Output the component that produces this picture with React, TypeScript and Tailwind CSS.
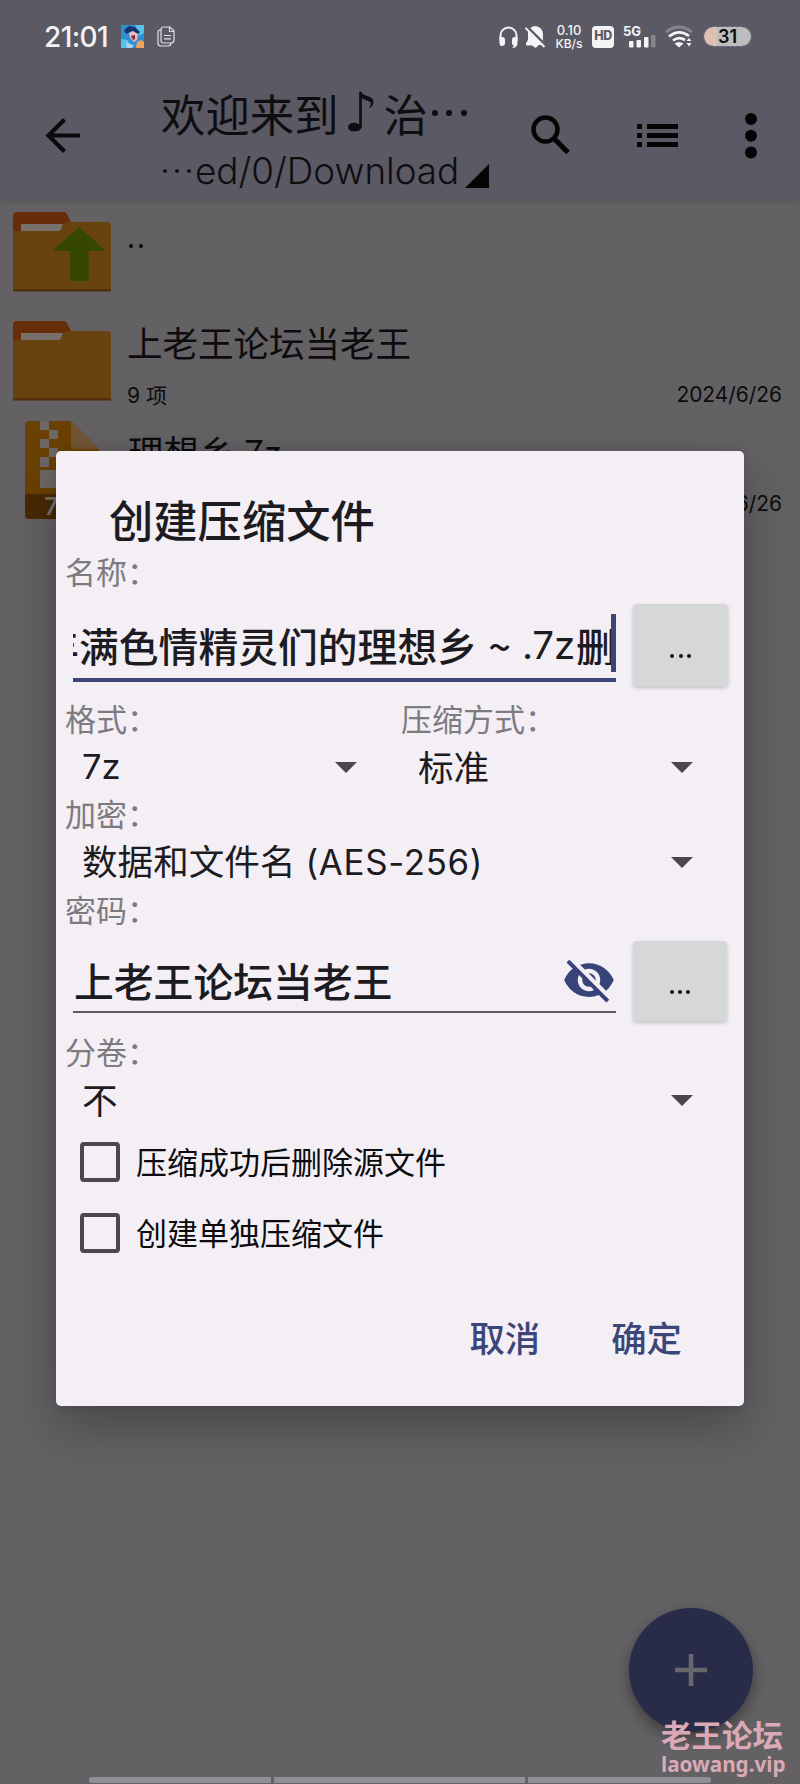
import type { ReactNode } from "react";

const LABEL = "h-9 flex items-center pb-[5px] pl-[9px] text-[31px] leading-none text-[#7d7b80]";
const VALUE = "pb-[4px] text-[35.6px] leading-none text-[#1c1b1f] whitespace-pre";

function Caret() {
  return (
    <svg className="mb-px shrink-0" width="22" height="11" viewBox="0 0 22 11">
      <path d="M0 0h22L11 11z" fill="#49474c" />
    </svg>
  );
}

function MoreButton({ className }: { className: string }) {
  return (
    <button
      className={`flex shrink-0 items-center justify-center gap-[4.2px] rounded bg-[#d6d8d8] shadow-[0_2px_4px_rgba(0,0,0,0.2)] ${className}`}
    >
      <i className="size-1 rounded-full bg-[#151517]" />
      <i className="size-1 rounded-full bg-[#151517]" />
      <i className="size-1 rounded-full bg-[#151517]" />
    </button>
  );
}

function CheckRow({ children }: { children: ReactNode }) {
  return (
    <label className="flex h-[71.5px] items-center gap-4 pl-6">
      <span className="size-10 rounded border-[4.5px] border-[#4b494e]" />
      <span className="pb-[3px] text-[31px] leading-none text-[#0c0c0e]">{children}</span>
    </label>
  );
}

function Folder({ up = false }: { up?: boolean }) {
  return (
    <svg width="98" height="80" viewBox="0 0 98 80" className="shrink-0">
      <path d="M0 30V4q0-4 4-4h47q2 0 3 2l5 10v18z" fill="#672c08" />
      <path d="M8 12h42l-3 8H8z" fill="#77706c" />
      <path d="M0 19h46q2 0 3-3l2-4q1-2 4-2h39q4 0 4 4v65H0z" fill="#68430f" />
      <path d="M0 77h98v2.5H0z" fill="#51300b" />
      {up && <path d="M66 15l27 24H75.500v30H57V39H39z" fill="#354700" />}
    </svg>
  );
}

function ArchiveFile() {
  return (
    <svg width="74" height="98" viewBox="0 0 74 98" className="shrink-0">
      <path d="M4 0h42l28 28v66q0 4-4 4H4q-4 0-4-4V4q0-4 4-4z" fill="#6b4103" />
      <path d="M46 0l28 28H50q-4 0-4-4z" fill="#705433" />
      <path d="M0 73h74v21q0 4-4 4H4q-4 0-4-4z" fill="#472a03" />
      <path
        d="M15 0h9v9h-9zM24 9h9v9h-9zM15 18h9v9h-9zM24 27h9v9h-9zM15 36h9v10h-9zM15 49h18v18H15z"
        fill="#6d6867"
      />
      <text x="19" y="94" fontSize="25" fontWeight="700" fontFamily="Lato" fill="#77706c">
        7Z
      </text>
    </svg>
  );
}

function StatusBar() {
  return (
    <div className="flex h-[73px] items-center pr-[49px] pl-[44px] text-[#f2f2f5]">
      <span className="w-[77px] font-[Inter] text-[28px] leading-none font-medium tracking-[-0.6px]">21:01</span>
      <svg width="23" height="23" viewBox="0 0 23 23">
        <rect width="23" height="23" fill="#2f8fd0" />
        <path d="M0 14l7 1 3 8H0zM14 0h9v8l-5 3z" fill="#56c3ea" />
        <path d="M3 5l5-4 6 1 5 5-3 3-5-4-6 3z" fill="#18346f" />
        <path d="M8 8l4-2 5 3-1 6-3 2-4-4z" fill="#e8bcb8" />
        <path d="M10 11l4-1v4l-2 1z" fill="#822746" />
        <path d="M16 17l4-2 3 2v6h-8z" fill="#f3a15c" />
        <path d="M5 17l4 2 4 1-2 3H6z" fill="#a9d6ec" />
      </svg>
      <svg className="ml-[13px]" width="18" height="21" viewBox="0 0 18 21" fill="none" stroke="#e0e0e4" strokeWidth="1.2">
        <path d="M6.500 1H13l4 4v9q0 3-3 3H6.500q-2.500 0-2.500-2.500V3.500Q4 1 6.500 1zM12.500 1v4.500H17M4 3.500Q1 4 1 6v11q0 3 3 3h7q3 0 3-3M7 9.500h7M7 12.800h7" />
      </svg>
      <div className="ml-auto flex items-center">
        <svg width="19" height="22" viewBox="0 0 19 22">
          <path d="M1.500 15V9.500a8 8 0 0116 0V15" fill="none" stroke="#f4f4f6" strokeWidth="2" />
          <path d="M.5 11h3q2.500 0 2.500 3v3q0 3-3 3-2.500 0-2.500-3zM18.500 11h-3q-2.500 0-2.500 3v3q0 2.500 2 3l-2 2q5.500 0 5.500-5z" fill="#f4f4f6" />
        </svg>
        <svg className="ml-[7px]" width="21" height="22" viewBox="0 0 21 22">
          <path d="M4 3Q7 0 10.500 0q7 1 7.500 8v7q1 1.500 2 2.500v1.500h-6.500Q10.500 24 7.500 19.500H1V17q2-2 2-4V7z" fill="#f4f4f6" />
          <path d="M2 .5L21 19.500" stroke="#5b5963" strokeWidth="2.500" />
          <path d="M.5 1.800L19.500 21" stroke="#f4f4f6" strokeWidth="1.900" />
        </svg>
        <div className="ml-[7px] flex w-8 flex-col items-center font-[Inter] text-[13px] leading-[13px] font-medium">
          <span>0.10</span>
          <span className="text-[12px]">KB/s</span>
        </div>
        <div className="ml-[7px] flex h-[22px] w-[22px] items-center justify-center rounded-[4px] bg-[#f4f4f6] font-[Inter] text-[12.5px] leading-none font-extrabold tracking-[-0.5px] text-[#5b5962]">
          HD
        </div>
        <svg className="ml-[9px]" width="33" height="23" viewBox="0 0 33 23" fill="#f4f4f6">
          <text x="0" y="10.500" fontSize="13" fontWeight="700" fontFamily="Inter">5G</text>
          <rect x="6" y="16" width="4.500" height="6.500" rx="1" />
          <rect x="13.500" y="15" width="4.500" height="7.500" rx="1" />
          <rect x="21" y="12" width="4.500" height="10.500" rx="1" />
          <rect x="28" y="10" width="4.500" height="12.500" rx="1" fill="#86848c" />
        </svg>
        <svg className="ml-[9px]" width="28" height="23" viewBox="0 0 28 23" fill="none" strokeWidth="2.800">
          <path d="M1 7Q14-3 27 7" stroke="#86848c" />
          <path d="M4 11.500q10-8 20-.5M8 15.500q6-4.500 12-.5" stroke="#f4f4f6" />
          <path d="M9.500 18.500q4.500-3 9 0L14 22.500zM21.500 16l2.500-3 2.500 3zM21.500 18l2.500 3.500 2.500-3.500z" fill="#f4f4f6" />
        </svg>
        <div className="ml-[11px] flex h-[19px] w-[47px] items-center justify-center rounded-full bg-[linear-gradient(90deg,#dfbfb2_0,#dfbfb2_12px,#bdbdbd_14px)] font-[Inter] text-[18px] leading-none font-semibold text-[#0b0b0d] outline-1 outline-dashed outline-[#77758c]">
          31
        </div>
      </div>
    </div>
  );
}

function Toolbar() {
  return (
    <div className="flex h-[127px] text-[#0e0e11]">
      <svg className="mt-[45px] ml-[45px] shrink-0" width="35" height="35" viewBox="0 0 35 35" fill="none" stroke="#0a0a0c" strokeWidth="4.200">
        <path d="M19.500 1.500L3.500 17.500l16 16M3 17.500h32" />
      </svg>
      <div className="ml-[81px] w-[335px]">
        <div className="mt-[18px] flex h-11 items-center text-[44.4px] leading-none whitespace-nowrap">
          <span>欢迎来到</span>
          <span className="w-[45px] text-center font-['DejaVu_Sans'] text-[54px]">♪</span>
          <span>治</span>
          <span className="ml-1 flex gap-[8.5px]">
            <i className="size-1.5 rounded-full bg-[#0e0e11]" />
            <i className="size-1.5 rounded-full bg-[#0e0e11]" />
            <i className="size-1.5 rounded-full bg-[#0e0e11]" />
          </span>
        </div>
        <div className="mt-[16px] flex h-10 items-center">
          <span className="ml-[2px] flex gap-2">
            <i className="size-1 rounded-full bg-[#141418]" />
            <i className="size-1 rounded-full bg-[#141418]" />
            <i className="size-1 rounded-full bg-[#141418]" />
          </span>
          <span className="ml-1 font-[Inter] text-[36.8px] leading-none font-light">ed/0/Download</span>
          <svg className="mt-2.5 ml-1.5 shrink-0" width="24" height="24" viewBox="0 0 24 24">
            <path d="M24 0v24H0z" fill="#050506" />
          </svg>
        </div>
      </div>
      <svg className="mt-[42px] ml-[35px] shrink-0" width="39" height="40" viewBox="0 0 39 40" fill="none" stroke="#050506">
        <circle cx="14.500" cy="14.500" r="12" strokeWidth="4.500" />
        <path d="M23 23.500l14 14" strokeWidth="5.200" />
      </svg>
      <svg className="mt-[51px] ml-[67px] shrink-0" width="41" height="24" viewBox="0 0 41 24" fill="#050506">
        <path d="M0 0h5v5H0zM0 9h5v5H0zM0 18h5v5H0zM10 0h31v5H10zM10 9h31v5H10zM10 18h31v5H10z" />
      </svg>
      <svg className="mt-10 ml-[67px] shrink-0" width="12" height="46" viewBox="0 0 12 46" fill="#050506">
        <circle cx="6" cy="6" r="6" />
        <circle cx="6" cy="22.700" r="6" />
        <circle cx="6" cy="39.500" r="6" />
      </svg>
    </div>
  );
}

function FileList() {
  return (
    <div className="text-[#0c0c0d]">
      <div className="flex h-[109px] pt-3 pl-[13px]">
        <Folder up />
        <span className="mt-8 ml-[18px] flex gap-[6px]">
          <i className="size-1 rounded-full bg-[#0c0c0d]" />
          <i className="size-1 rounded-full bg-[#0c0c0d]" />
        </span>
      </div>
      <div className="flex h-[109px] pt-3 pr-[18px] pl-[13px]">
        <Folder />
        <div className="ml-4 flex-1">
          <div className="flex h-[42px] items-center text-[35.5px] leading-none">上老王论坛当老王</div>
          <div className="mt-5 flex h-6 items-center justify-between text-[21px] leading-none">
            <span>
              <span className="font-[Inter]">9 </span>项
            </span>
            <span className="font-[Inter] text-[20.9px]">2024/6/26</span>
          </div>
        </div>
      </div>
      <div className="flex h-[109px] pt-[3px] pr-[18px] pl-[25px]">
        <ArchiveFile />
        <div className="ml-[29px] flex-1 pt-[9px]">
          <div className="flex h-[42px] items-center text-[35.5px] leading-none">理想乡.7z</div>
          <div className="mt-5 flex h-6 items-center justify-end text-[21px] leading-none">
            <span className="font-[Inter] text-[20.9px]">2024/6/26</span>
          </div>
        </div>
      </div>
    </div>
  );
}

function Dialog() {
  return (
    <div className="absolute top-[451px] left-14 h-[955px] w-[688px] rounded-[5px] bg-[#f3eff5] pt-[43px] shadow-[0_22px_48px_rgba(0,0,0,0.26),0_0_12px_rgba(0,0,0,0.1)]">
      <h1 className="flex h-14 items-center pb-[5px] pl-[53px] text-[44.3px] leading-none font-medium text-[#1c1b1f]">
        创建压缩文件
      </h1>
      <div className="flex h-11 items-center pb-[4px] pl-[9px] text-[31px] leading-none text-[#7d7b80]">名称：</div>

      <div className="flex h-[108px] pt-[10px] pl-[17px]">
        <div className="mt-[10px] flex h-[67.5px] w-[542.5px] items-start justify-end overflow-hidden border-b-[4.5px] border-[#3b4577]">
          <div className="flex h-[58px] shrink-0 items-center pt-1 text-[39.8px] leading-none font-medium whitespace-pre text-[#1c1b1f]">
            <span>丰满色情精灵们的理想乡</span>
            <span className="w-[45px] text-center">~</span>
            <span className="w-[54px] text-left font-[Inter] text-[38.5px] font-normal tracking-[-0.2px]">.7z</span>
            <span className="w-[35px] overflow-hidden">删</span>
          </div>
          <div className="h-[58px] w-[4.5px] shrink-0 bg-[#3b4577]" />
        </div>
        <MoreButton className="ml-[17.5px] h-[82px] w-[95px] pt-[22px]" />
      </div>

      <div className="flex">
        <div className="w-[336px]">
          <div className={LABEL}>格式：</div>
          <div className="flex h-[59px] items-center justify-between pr-[35px] pl-[26px]">
            <span className={VALUE}>
              <span className="font-[Inter] text-[34.5px]">7z</span>
            </span>
            <Caret />
          </div>
        </div>
        <div className="w-[336px]">
          <div className={LABEL}>压缩方式：</div>
          <div className="flex h-[59px] items-center justify-between pr-[35px] pl-[26px]">
            <span className={VALUE}>标准</span>
            <Caret />
          </div>
        </div>
      </div>

      <div className={LABEL}>加密：</div>
      <div className="flex h-[60px] items-center justify-between pr-[51px] pl-[26px]">
        <span className={VALUE}>
          数据和文件名<span className="ml-2.5 font-[Inter] text-[34.8px] tracking-[0.7px]">(AES-256)</span>
        </span>
        <Caret />
      </div>

      <div className={LABEL}>密码：</div>
      <div className="flex h-[106px] pt-3 pl-[17px]">
        <div className="flex h-[72px] w-[542.5px] items-center justify-between border-b-[2.5px] border-[#5b575e] pt-1">
          <span className="pt-[3px] pl-px text-[39.8px] leading-none font-medium text-[#1c1b1f]">上老王论坛当老王</span>
          <svg className="mt-1" width="54" height="54" viewBox="0 0 24 24" fill="#38437a">
            <path d="M12 7c2.760 0 5 2.240 5 5 0 .65-.13 1.260-.36 1.830l2.920 2.920c1.510-1.260 2.700-2.890 3.430-4.750-1.730-4.390-6-7.500-11-7.500-1.400 0-2.740.25-3.980.7l2.160 2.160C10.740 7.130 11.350 7 12 7zM2 4.270l2.280 2.280.46.46C3.080 8.300 1.780 10.020 1 12c1.730 4.390 6 7.500 11 7.500 1.550 0 3.030-.3 4.380-.84l.42.42L19.730 22 21 20.730 3.270 3 2 4.270zM7.530 9.800l1.550 1.550c-.05.21-.08.43-.08.65 0 1.660 1.340 3 3 3 .22 0 .44-.03.65-.08l1.550 1.550c-.67.33-1.410.53-2.200.53-2.760 0-5-2.240-5-5 0-.79.2-1.530.53-2.200zm4.310-.78l3.150 3.150.02-.16c0-1.660-1.340-3-3-3l-.17.01z" />
          </svg>
        </div>
        <MoreButton className="ml-[17.5px] h-20 w-[94px] pt-[22px]" />
      </div>

      <div className={LABEL}>分卷：</div>
      <div className="flex h-[55px] items-center justify-between pt-[5px] pr-[51px] pl-[26px]">
        <span className={VALUE}>不</span>
        <Caret />
      </div>

      <CheckRow>压缩成功后删除源文件</CheckRow>
      <CheckRow>创建单独压缩文件</CheckRow>

      <div className="mt-[39px] flex h-[58px] items-center justify-end gap-[71px] pr-[62px] text-[35.4px] leading-none font-medium text-[#3c4678]">
        <button>取消</button>
        <button>确定</button>
      </div>
    </div>
  );
}

export default function App() {
  return (
    <div className="relative h-[1784px] w-[800px] overflow-hidden bg-[#636164] font-['Noto_Sans_CJK_SC',sans-serif]">
      <header className="h-[200px] bg-[#5b5963] shadow-[0_2px_5px_rgba(0,0,0,0.12)]">
        <StatusBar />
        <Toolbar />
      </header>
      <FileList />

      <Dialog />

      <div className="absolute top-[1608px] left-[629px] flex size-[124px] items-center justify-center rounded-full bg-[#292c48] shadow-[0_6px_14px_rgba(0,0,0,0.4)]">
        <svg width="32" height="32" viewBox="0 0 32 32" stroke="#68686c" strokeWidth="4.500">
          <path d="M0 16h32M16 0v32" />
        </svg>
      </div>

      <div className="absolute top-[1777px] left-[89px] flex h-[5.5px] w-[622px] gap-[3px]">
        <i className="h-full w-[182px] rounded-l-full bg-[#929094]" />
        <i className="h-full w-[251px] bg-[#929094]" />
        <i className="h-full flex-1 rounded-r-full bg-[#929094]" />
      </div>

      <div className="absolute top-[1716px] left-[661px] text-[#dba9b6]">
        <div className="text-[30.5px] leading-9 font-bold whitespace-nowrap">老王论坛</div>
        <div className="font-['Noto_Sans'] text-[20.7px] leading-6 font-bold">laowang.vip</div>
      </div>
    </div>
  );
}
